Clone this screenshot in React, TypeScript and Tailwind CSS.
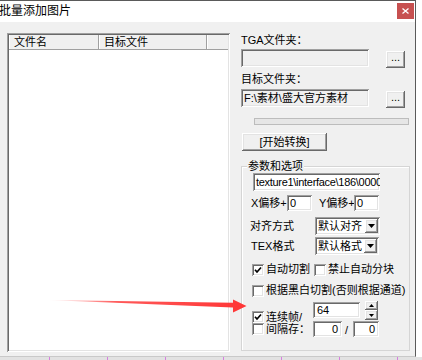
import React from 'react';

const raised =
  'bg-[#f0f0f0] shadow-[inset_-1px_-1px_0_#696969,inset_1px_1px_0_#ffffff,inset_-2px_-2px_0_#a0a0a0,inset_2px_2px_0_#e3e3e3]';
const sunken =
  'shadow-[inset_1px_1px_0_#a0a0a0,inset_-1px_-1px_0_#ffffff,inset_2px_2px_0_#696969,inset_-2px_-2px_0_#e3e3e3]';

function Check({ on }: { on?: boolean }) {
  return (
    <span className={`w-[12px] h-[12px] bg-white ${sunken} flex items-center justify-center shrink-0`}>
      {on && (
        <svg width="8" height="8" viewBox="0 0 8 8">
          <path d="M1 3.8 L3 6 L7 1.5" fill="none" stroke="#000" strokeWidth="1.7" />
        </svg>
      )}
    </span>
  );
}

function Select({ value, width }: { value: string; width: string }) {
  return (
    <div className={`${width} h-[18px] bg-white ${sunken} flex items-center pl-[3px] pr-[2px]`}>
      <span className="flex-1 whitespace-nowrap">{value}</span>
      <span className={`w-[13px] h-[14px] ${raised} flex items-center justify-center`}>
        <svg width="7" height="4" viewBox="0 0 7 4">
          <path d="M0 0 H7 L3.5 4 Z" fill="#000" />
        </svg>
      </span>
    </div>
  );
}

export default function App() {
  const ticks = [49, 107, 165, 223, 280, 338, 395];

  return (
    <div className="w-[422px] h-[360px] bg-[#f4f4f4] relative overflow-hidden font-['Liberation_Sans','Noto_Sans_CJK_SC',sans-serif] text-[11px] text-black">
      <div className="flex h-[357px]">
        <div className="w-[416px] h-full border-t border-r border-b border-t-[#5a5a5a] border-r-[#5a5a5a] border-b-[#c9c9c9] flex flex-col bg-[#f0f0f0]">
          {/* title bar */}
          <div className="h-[21px] bg-white flex justify-between shrink-0">
            <span className="text-[12px] leading-[21px] -ml-[1px]">批量添加图片</span>
            <span className="mt-[2px] mr-[1px] w-[17px] h-[16px] bg-[#c75050] flex items-center justify-center">
              <svg width="7" height="6" viewBox="0 0 7 6">
                <path d="M0.5 0.5 L6.5 5.5 M6.5 0.5 L0.5 5.5" stroke="#fff" strokeWidth="1.3" />
              </svg>
            </span>
          </div>

          {/* body */}
          <div className="flex-1 flex pl-[7px] pt-[11px]">
            {/* file list */}
            <div className={`w-[223px] h-[319px] bg-white ${sunken} p-[2px] flex flex-col`}>
              <div className="h-[15px] flex bg-[#f0f0f0] border-b border-[#a0a0a0] leading-[14px]">
                <div className="w-[90px] pl-[5px] border-r border-[#a0a0a0] shadow-[inset_1px_0_0_#ffffff]">文件名</div>
                <div className="w-[108px] pl-[5px] border-r border-[#a0a0a0] shadow-[inset_1px_0_0_#ffffff]">目标文件</div>
                <div className="flex-1 shadow-[inset_1px_0_0_#ffffff]"></div>
              </div>
            </div>

            {/* right panel */}
            <div className="ml-[11px] w-[174px] flex flex-col">
              <div className="h-[14px] leading-[14px]">TGA文件夹：</div>
              <div className="flex mt-[2px] h-[19px]">
                <div className={`w-[128px] h-[18px] bg-[#f0f0f0] ${sunken}`}></div>
                <div className={`ml-[17px] mt-[2px] w-[19px] h-[17px] ${raised} flex justify-center leading-[13px]`}>...</div>
              </div>

              <div className="mt-[4px] h-[14px] leading-[14px]">目标文件夹：</div>
              <div className="flex mt-[3px] h-[19px]">
                <div className={`w-[128px] h-[18px] bg-[#f0f0f0] ${sunken} flex items-center pl-[3px] overflow-hidden whitespace-nowrap`}>
                  F:\素材\盛大官方素材
                </div>
                <div className={`ml-[17px] mt-[2px] w-[19px] h-[17px] ${raised} flex justify-center leading-[13px]`}>...</div>
              </div>

              <div className="mt-[10px] ml-[13px] w-[155px] h-[7px] border border-[#bcbcbc] bg-[#e6e6e6]"></div>

              <div className={`mt-[8px] ml-[1px] w-[85px] h-[18px] ${raised} flex items-center justify-center`}>[开始转换]</div>

              {/* group box */}
              <div className="mt-[15px] w-[169px] h-[185px] relative border border-[#d5d5d5] shadow-[inset_1px_1px_0_#ffffff] flex flex-col">
                <span className="absolute left-[5px] -top-[8px] px-[1px] bg-[#f0f0f0] leading-[14px]">参数和选项</span>

                <div className={`mt-[6px] ml-[11px] w-[127px] h-[18px] bg-white ${sunken} flex items-center pl-[3px] overflow-hidden whitespace-nowrap tracking-[-0.3px]`}>
                  texture1\interface\186\0000
                </div>

                <div className="mt-[4px] h-[16px] flex items-center pl-[9px]">
                  <span className="w-[36px] whitespace-nowrap">X偏移+</span>
                  <div className={`w-[25px] h-[16px] bg-white ${sunken} flex items-center pl-[3px]`}>0</div>
                  <span className="ml-[7px] w-[35px] whitespace-nowrap">Y偏移+</span>
                  <div className={`w-[25px] h-[16px] bg-white ${sunken} flex items-center pl-[3px]`}>0</div>
                </div>

                <div className="mt-[6px] h-[18px] flex items-center pl-[8px]">
                  <span className="w-[65px]">对齐方式</span>
                  <Select value="默认对齐" width="w-[65px]" />
                </div>

                <div className="mt-[2px] h-[18px] flex items-center pl-[9px]">
                  <span className="w-[64px]">TEX格式</span>
                  <Select value="默认格式" width="w-[64px]" />
                </div>

                <div className="mt-[8px] h-[13px] flex items-center pl-[10px]">
                  <div className="w-[62px] flex items-center">
                    <Check on />
                    <span className="ml-[2px] whitespace-nowrap">自动切割</span>
                  </div>
                  <Check />
                  <span className="ml-[2px] whitespace-nowrap">禁止自动分块</span>
                </div>

                <div className="mt-[8px] h-[13px] flex items-center pl-[10px]">
                  <Check />
                  <span className="ml-[2px] whitespace-nowrap">根据黑白切割(否则根据通道)</span>
                </div>

                <div className="mt-[4px] h-[19px] flex items-start pl-[10px]">
                  <div className="mt-[8px] w-[61px] flex items-center">
                    <Check on />
                    <span className="ml-[2px] whitespace-nowrap">连续帧/</span>
                  </div>
                  <div className={`mt-[1px] w-[47px] h-[16px] bg-white ${sunken} flex items-center pl-[4px]`}>64</div>
                  <div className="ml-[5px] w-[13px] h-[19px] flex flex-col">
                    <span className={`h-[9px] ${raised} flex items-center justify-center`}>
                      <svg width="5" height="3" viewBox="0 0 5 3">
                        <path d="M0 3 H5 L2.5 0 Z" fill="#000" />
                      </svg>
                    </span>
                    <span className={`h-[10px] ${raised} flex items-center justify-center`}>
                      <svg width="5" height="3" viewBox="0 0 5 3">
                        <path d="M0 0 H5 L2.5 3 Z" fill="#000" />
                      </svg>
                    </span>
                  </div>
                </div>

                <div className="mt-[1px] h-[16px] flex items-end pl-[10px]">
                  <div className="w-[61px] flex items-center">
                    <Check />
                    <span className="ml-[2px] whitespace-nowrap">间隔存：</span>
                  </div>
                  <div className={`w-[29px] h-[16px] bg-white ${sunken} flex items-center justify-end pr-[4px]`}>0</div>
                  <span className="ml-[3px] w-[8px] leading-[14px]">/</span>
                  <div className={`w-[26px] h-[16px] bg-white ${sunken} flex items-center justify-end pr-[4px]`}>0</div>
                </div>
              </div>
            </div>
          </div>
        </div>
        <div className="flex-1 bg-white"></div>
      </div>

      {/* bottom strip */}
      <div className="h-[3px] bg-[#e2e2e2] flex">
        {ticks.map((x, i) => (
          <span
            key={x}
            className={`w-[1px] h-[3px] bg-[#d77fe0] ${i === 0 ? 'ml-[49px]' : 'ml-[57px]'}`}
          ></span>
        ))}
      </div>

      {/* red annotation arrow */}
      <svg className="absolute left-0 top-0 pointer-events-none" width="422" height="360" viewBox="0 0 422 360">
        <defs>
          <linearGradient id="arr" x1="47" y1="0" x2="247" y2="0" gradientUnits="userSpaceOnUse">
            <stop offset="0" stopColor="#ff3b3b" stopOpacity="0" />
            <stop offset="0.35" stopColor="#ff3b3b" stopOpacity="0.85" />
            <stop offset="1" stopColor="#ff3535" stopOpacity="1" />
          </linearGradient>
        </defs>
        <path d="M47 300 L233 302.8 L233 299.5 L246.5 306 L233 312.5 L233 307.6 Z" fill="url(#arr)" />
      </svg>
    </div>
  );
}
